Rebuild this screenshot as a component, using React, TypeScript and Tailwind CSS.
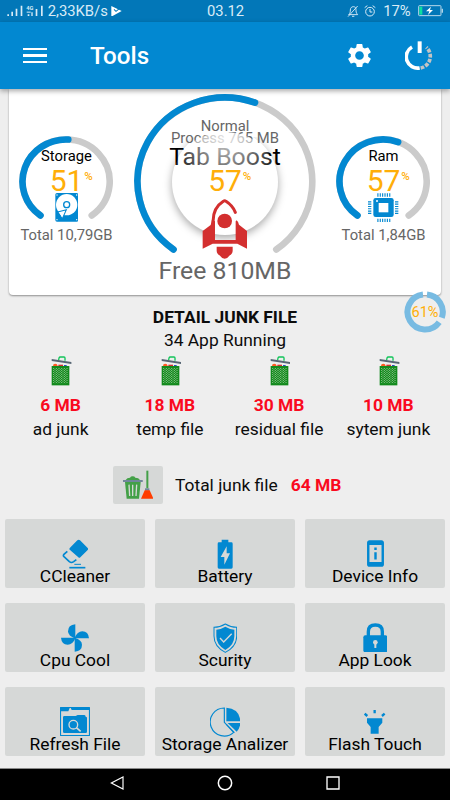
import type { ReactNode } from "react";
import { MdSettings, MdPermDeviceInformation } from "react-icons/md";

const BLUE = "#0288d1";

interface ArtProps {
  box: string;
  className: string;
  children: ReactNode;
}

function Art({ box, className, children }: ArtProps) {
  return (
    <svg viewBox={box} className={className} fill="none" preserveAspectRatio="none">
      {children}
    </svg>
  );
}

function StatusBar() {
  return (
    <div className="flex h-[22px] items-center bg-[#0277b8] pl-[7px] pr-[7px] text-[14.8px] leading-[22px] text-[#d9ebf6]">
      <div className="flex w-[200px] items-center">
        <Art box="21 12 110 40" className="h-[13.3px] w-[36.7px]">
          <g fill="#d9ebf6">
            <path d="M22 43h5v5h-5zM34 35h5v13h-5zM47 26h5v22h-5zM62 17h5v31h-5z" />
            <path d="M83 43h5v5h-5zM94 37h4v11h-4zM107 27h5v21h-5zM123 17h5v31h-5z" />
            <path d="M80 35h12v3H80z" />
            <text x="79" y="30" fontSize="17" fontWeight="700" fontFamily="Roboto">4G</text>
          </g>
        </Art>
        <span className="ml-[4px]">2,33KB/s</span>
        <Art box="334 17 33 32" className="ml-[3px] h-[10.7px] w-[11px]">
          <path d="M335 17l31 15-31 17z" fill="#fff" />
          <path d="M343 27l6 6 10-8" stroke="#0277b8" strokeWidth="3" />
        </Art>
      </div>
      <span className="flex-1">03.12</span>
      <Art box="371 14 36 37" className="h-[12.3px] w-[12px]">
        <path d="M376 43h27c-5-5-5-10-5-15 0-6-3-9-8-9s-9 4-9 10c0 5 0 9-5 14zM386 48h7M403 17l-29 32" stroke="#d9ebf6" strokeWidth="2.8" />
      </Art>
      <Art box="422 14 36 36" className="ml-[5px] h-[12px] w-[12px]">
        <circle cx="440" cy="34" r="13" stroke="#d9ebf6" strokeWidth="3" />
        <path d="M440 26v9h7M424 22l8-6M456 22l-8-6" stroke="#d9ebf6" strokeWidth="3" />
      </Art>
      <span className="ml-[7px]">17%</span>
      <Art box="579 15 76 34" className="ml-[7px] h-[11.3px] w-[25.3px]">
        <rect x="581" y="17" width="67" height="30" rx="2" stroke="#b8d8ea" strokeWidth="3" />
        <path d="M583 20h9v24h-9z" fill="#0be0a0" />
        <path d="M650 26h4v12h-4z" fill="#b8d8ea" />
        <path d="M618 20l-15 14h10l-4 11 15-15h-9z" fill="#fff" />
      </Art>
    </div>
  );
}

function AppBar() {
  return (
    <header className="relative z-30 flex h-[67px] items-center bg-[#0288d1] pl-[23px] pr-[15px] shadow-[0_2px_5px_rgba(0,0,0,0.35)]">
      <div className="flex w-6 flex-col gap-[4.5px]">
        <span className="h-[2.3px] bg-white" />
        <span className="h-[2.3px] bg-white" />
        <span className="h-[2.3px] bg-white" />
      </div>
      <h1 className="ml-[43px] flex-1 pt-px text-[24.2px] font-medium leading-7 text-white">Tools</h1>
      <MdSettings className="size-[29px] text-white" />
      <Art box="541 121 90 90" className="ml-[31px] size-[30px]">
        <path d="M562 139a34 34 0 0 0 23 63" stroke="#fff" strokeWidth="11" />
        <path d="M588 202a36 36 0 0 0 17-62" stroke="#c4c4c4" strokeWidth="11" strokeDasharray="11 4" />
        <path d="M585 122v35" stroke="#fff" strokeWidth="12" />
      </Art>
    </header>
  );
}

interface ArcProps {
  rx: number;
  ry: number;
  value: number;
  className: string;
}

// 288 degree arc that is open at the bottom
function Arc({ rx, ry, value, className }: ArcProps) {
  const cx = rx + 3.5;
  const cy = ry + 3.5;
  const at = (deg: number) => {
    const a = (deg * Math.PI) / 180;
    return `${cx + rx * Math.cos(a)} ${cy + ry * Math.sin(a)}`;
  };
  const sweep = (288 * value) / 100;
  const large = sweep > 180 ? 1 : 0;
  return (
    <svg width={cx * 2} height={cy * 2} className={className} fill="none" strokeWidth="6.6" strokeLinecap="round">
      <path d={`M${at(126)}A${rx} ${ry} 0 1 1 ${at(414)}`} stroke="#cbcbcb" />
      <path d={`M${at(126)}A${rx} ${ry} 0 ${large} 1 ${at(126 + sweep)}`} stroke={BLUE} />
    </svg>
  );
}

function Percent({ value }: { value: number }) {
  return (
    <div className="relative z-20 text-[30px] leading-[30px] text-[#ffae08]">
      {value}
      <span className="absolute left-full top-[4px] ml-[1px] text-[11.5px] font-medium leading-[12px]">%</span>
    </div>
  );
}

function DiskIcon() {
  return (
    <Art box="164 316 71 86" className="h-[28.7px] w-[23.7px]">
      <rect x="165" y="316" width="69" height="86" rx="5" fill={BLUE} />
      <circle cx="199" cy="351" r="32" fill="#fff" />
      <circle cx="199" cy="351" r="9" stroke={BLUE} strokeWidth="4" />
      <path d="M172 373l26-7-12 27z" fill="#fff" stroke={BLUE} strokeWidth="3" />
      <path d="M172 373l8 12" stroke={BLUE} strokeWidth="3" />
      <path d="M208 396l18-17v17z" fill={BLUE} />
      <g fill="#fff">
        <circle cx="170" cy="322" r="2" />
        <circle cx="229" cy="322" r="2" />
        <circle cx="170" cy="396" r="2" />
        <circle cx="229" cy="396" r="2" />
      </g>
    </Art>
  );
}

function ChipIcon() {
  return (
    <Art box="206 315 92 88" className="h-[29.3px] w-[30.7px]">
      <rect x="222" y="330" width="61" height="57" rx="7" fill={BLUE} />
      <path d="M238 345h29v28h-29z" fill="#fff" />
      <circle cx="233" cy="339" r="3" fill="#fff" />
      <path d="M234 321h39M234 397h39" stroke={BLUE} strokeWidth="10" strokeDasharray="3.4 3.7" />
      <path d="M211 340v38M292 340v38" stroke={BLUE} strokeWidth="10" strokeDasharray="3.4 3.5" />
    </Art>
  );
}

function RocketIcon() {
  return (
    <Art box="232 333 138 180" className="relative z-20 h-[60px] w-[46px]">
      <path d="M266 412c-4-36 8-58 30-72q4-3 8 0 20 13 28 33" stroke="#d32f2f" strokeWidth="9" strokeLinecap="round" />
      <circle cx="300" cy="399" r="22" fill="#d32f2f" />
      <path d="M262 395l9 5v56h62v-56l3-3q5 4 7 13l24 19v53l-29-15h-74l-30 15v-53l24-18z" fill="#d32f2f" />
      <path d="M276 476h48v12q0 9-10 15-6 9-14 9t-14-9q-10-6-10-15z" fill="#d32f2f" />
    </Art>
  );
}

function SmallGauge({ title, value, total, icon }: { title: string; value: number; total: string; icon: ReactNode }) {
  return (
    <div className="relative flex w-[115px] flex-col items-center pt-[58px]">
      <Arc rx={43.6} ry={42} value={value} className="absolute left-[10.4px] top-[46.8px]" />
      <p className="relative text-[14.8px] leading-[18px] text-black">{title}</p>
      <div className="mt-px">
        <Percent value={value} />
      </div>
      <div className="relative -mt-[3px] flex h-[29px] items-center">{icon}</div>
      <p className="mt-[4px] whitespace-nowrap text-[14.8px] leading-[18px] text-[#666]">{total}</p>
    </div>
  );
}

function BoostGauge() {
  return (
    <div className="relative flex w-[202px] flex-col items-center pt-[31px] text-[#666]">
      <Arc rx={87.4} ry={84} value={57} className="absolute left-[10.1px] top-[4.8px]" />
      <div className="absolute left-[48px] top-[40px] size-[106px] rounded-full bg-white shadow-[0_3px_8px_rgba(0,0,0,0.35)]" />
      {/* hides the upper edge of the disc's shadow */}
      <div className="absolute left-[61px] top-[26px] h-[22px] w-20 bg-white" />
      <p className="relative text-[14.8px] leading-[12px]">Normal</p>
      <p className="relative text-[14.8px] leading-[12px]">Process 765 MB</p>
      <p className="relative mt-px text-[24.8px] leading-[24px] text-black">Tab Boost</p>
      <div className="absolute left-[48px] top-[43px] z-10 h-[103px] w-[106px] rounded-full bg-[radial-gradient(circle_at_50%_4%,rgba(255,255,255,0.82)_0,rgba(255,255,255,0.5)_28px,rgba(255,255,255,0.1)_56px)]" />
      <div className="-mt-[3px]">
        <Percent value={57} />
      </div>
      <div className="mt-[3px] h-[60px]">
        <RocketIcon />
      </div>
      <p className="relative -mt-[2px] text-[24.8px] leading-[28px]">Free 810MB</p>
    </div>
  );
}

function FloatingBadge() {
  return (
    <div className="absolute left-[404px] top-[291px] z-30 flex size-[42px] items-center justify-center">
      <svg viewBox="0 0 42 42" className="absolute inset-0" fill="none" stroke="#78bbe2" strokeWidth="6">
        <path d="M23 3.6A17.5 17.5 0 0 1 37.8 26.8" />
        <path d="M35.2 31.2A17.5 17.5 0 1 1 19 3.6" />
      </svg>
      <span className="relative text-[14.6px] leading-4 text-[#ffae08]">61%</span>
    </div>
  );
}

function TrashIcon() {
  return (
    <Art box="153 168 62 89" className="ml-[2px] h-[29.7px] w-[20.7px]">
      <path d="M176 180l1-6q1-3 4-3h11q3 0 3 3v8" stroke="#12c45a" strokeWidth="4" />
      <path d="M155 177l59 9v6l-59-9z" fill="#566573" />
      <path d="M159 198q0-7 7-7 6 0 7 7z" fill="#ff5a1f" />
      <path d="M175 194h14v5h-14z" fill="#d32f2f" />
      <path d="M192 195h8v4h-8z" fill="#2b4fc0" />
      <path d="M155 198h53v58h-53z" fill="#128a1c" />
      <path d="M161 204v46M169 204v46M177 204v46M185 204v46M193 204v46M201 204v46" stroke="#8cc48d" strokeWidth="3" strokeDasharray="3 3" />
      <path d="M165 207v43M173 207v43M181 207v43M189 207v43M197 207v43" stroke="#6fb472" strokeWidth="3" strokeDasharray="3 3" />
    </Art>
  );
}

function BroomIcon() {
  return (
    <Art box="68 46 92 88" className="h-[29.3px] w-[30.7px]">
      <path d="M74 82h47l-5 50H79z" fill="#43a047" />
      <path d="M86 90l2 34M97 90v34M109 90l-2 34" stroke="#d6d8d7" strokeWidth="4" />
      <path d="M76 76q4-7 13-7 2-4 8-4t8 4q10 0 14 7z" fill="#43a047" />
      <path d="M69 79h56" stroke="#71869b" strokeWidth="6" strokeLinecap="round" />
      <path d="M141 48v53" stroke="#43a047" strokeWidth="6" />
      <path d="M134 101h13v7h-13z" fill="#71869b" />
      <path d="M133 107h15l11 25h-37z" fill="#ff3d00" />
    </Art>
  );
}

const junk = [
  { size: "6 MB", label: "ad junk" },
  { size: "18 MB", label: "temp file" },
  { size: "30 MB", label: "residual file" },
  { size: "10 MB", label: "sytem junk" },
];

const tools: { label: string; icon: ReactNode }[] = [
  {
    label: "CCleaner",
    icon: (
      <Art box="185 84 80 90" className="h-[30px] w-[26.7px]">
        <path d="M231 88q4-3 8 0l23 23q3 3 0 6l-22 22q-3 3-6 0l-25-22q-4-3 0-7z" fill={BLUE} />
        <path d="M201 121l-11 10q-2 3 1 6l16 15q6 5 13 0l8-6" stroke={BLUE} strokeWidth="5" />
        <path d="M222 160h20" stroke={BLUE} strokeWidth="3" />
        <path d="M207 170h48" stroke={BLUE} strokeWidth="5" />
      </Art>
    ),
  },
  {
    label: "Battery",
    icon: (
      <Art box="0 0 48 90" className="h-[30px] w-[16px]">
        <path d="M14 2h20v8h9q4 0 4 4v71q0 4-4 4H6q-4 0-4-4V14q0-4 4-4h8z" fill={BLUE} />
        <path d="M29 22L11 54h11v23l17-34H29z" fill="#d6d8d7" />
      </Art>
    ),
  },
  {
    label: "Device Info",
    icon: <MdPermDeviceInformation className="-mt-px h-[29px] w-[29px] text-[#0288d1]" />,
  },
  {
    label: "Cpu Cool",
    icon: (
      <Art box="183 341 84 84" className="size-[28px]">
        <g fill={BLUE}>
          <path d="M226 385V342q-22 2-22 21 0 14 22 22z" />
          <path d="M223 384h44q-2-21-20-21-15 0-24 21z" />
          <path d="M224 382v42q22-2 22-21 0-14-22-21z" />
          <path d="M227 382h-44q2 21 20 21 15 0 24-21z" />
        </g>
      </Art>
    ),
  },
  {
    label: "Scurity",
    icon: (
      <Art box="0 0 74 90" className="-mt-px h-[30px] w-[24.7px]">
        <path d="M37 3q16 10 34 10v26q0 32-34 49Q3 71 3 39V13q18 0 34-10z" stroke={BLUE} strokeWidth="3" />
        <path d="M37 11q13 8 27 9v20q0 26-27 41Q10 66 10 40V20q14-1 27-9z" fill={BLUE} />
        <path d="M21 45l11 12 24-25" stroke="#d6d8d7" strokeWidth="4" />
      </Art>
    ),
  },
  {
    label: "App Look",
    icon: (
      <Art box="413 338 74 88" className="-mt-px h-[29.3px] w-[24.7px]">
        <path d="M429 377v-13q0-20 21-20t21 20v13" stroke={BLUE} strokeWidth="10" />
        <rect x="414" y="375" width="72" height="51" rx="6" fill={BLUE} />
        <circle cx="450" cy="396" r="7" fill="#d6d8d7" />
        <path d="M447 398h6v15h-6z" fill="#d6d8d7" />
      </Art>
    ),
  },
  {
    label: "Refresh File",
    icon: (
      <Art box="180 96 90 87" className="-mt-[2px] h-[29px] w-[30px]">
        <rect x="181.500" y="97.500" width="87" height="84" rx="2" stroke={BLUE} strokeWidth="3.500" />
        <path d="M181 97h29l-5 12h-24zM211 97h57v8h-53z" fill={BLUE} />
        <path d="M189 127q0-4 4-4h34l6-3h20q4 0 4 5 4 0 4 4v41q0 4-4 4h-64q-4 0-4-4z" fill={BLUE} />
        <circle cx="220" cy="149" r="13" stroke="#d6d8d7" strokeWidth="4" />
        <path d="M229 158l13 11" stroke="#d6d8d7" strokeWidth="5" />
      </Art>
    ),
  },
  {
    label: "Storage Analizer",
    icon: (
      <Art box="0 0 92 90" className="-mt-px h-[30px] w-[30.7px]">
        <path d="M43 3A42 42 0 1 0 71 76L43 46z" stroke={BLUE} strokeWidth="3.500" />
        <path d="M49 2q40 3 42 41H49z" fill={BLUE} />
        <path d="M53 48h38q-1 15-11 26z" fill={BLUE} />
        <path d="M49 52l24 25" stroke={BLUE} strokeWidth="3" />
      </Art>
    ),
  },
  {
    label: "Flash Touch",
    icon: (
      <Art box="418 98 64 84" className="-mt-px h-[28px] w-[21.3px]">
        <path d="M427 129h46v13l-11 13v20h-24v-20l-11-13z" fill={BLUE} />
        <path d="M450 104v10M420 115l8 7M480 115l-8 7" stroke={BLUE} strokeWidth="7" />
      </Art>
    ),
  },
];

export default function App() {
  return (
    <div className="relative flex h-[800px] w-[450px] flex-col overflow-hidden bg-[#eeeeee] font-[Roboto,sans-serif] text-[17.4px] text-[#0c0c0c]">
      <StatusBar />
      <AppBar />

      <section className="mx-[9px] flex h-[206px] rounded-b-[4px] bg-white shadow-[0_1px_2px_rgba(0,0,0,0.4)]">
        <SmallGauge title="Storage" value={51} total="Total 10,79GB" icon={<DiskIcon />} />
        <BoostGauge />
        <SmallGauge title="Ram" value={57} total="Total 1,84GB" icon={<ChipIcon />} />
      </section>
      <FloatingBadge />

      <section className="pt-[11px] text-center leading-[23px]">
        <h2 className="font-bold">DETAIL JUNK FILE</h2>
        <p>34 App Running</p>
      </section>

      <section className="flex pl-[6px] pr-[7px] pt-[4px] leading-6">
        {junk.map((item) => (
          <div key={item.label} className="flex flex-1 flex-col items-center">
            <div className="h-[37px]">
              <TrashIcon />
            </div>
            <p className="font-bold text-[#fa0a1e]">{item.size}</p>
            <p className="whitespace-nowrap">{item.label}</p>
          </div>
        ))}
      </section>

      <section className="flex items-center pl-[113px] pt-[25px]">
        <button className="flex h-[38px] w-[50px] items-center justify-center rounded-[2px] bg-[#d6d8d7]">
          <BroomIcon />
        </button>
        <p className="ml-3">Total junk file</p>
        <p className="ml-[13px] font-bold text-[#fa0a1e]">64 MB</p>
      </section>

      <section className="grid grid-cols-3 gap-x-[10px] gap-y-[15px] px-[5px] pt-[15px]">
        {tools.map((tool) => (
          <button
            key={tool.label}
            className="flex h-[69px] flex-col items-center rounded-[2px] bg-[#d6d8d7] pt-[20px]"
          >
            <span className="flex h-[30px] items-center">{tool.icon}</span>
            <span className="-mt-[4px] whitespace-nowrap leading-[22px] text-black">{tool.label}</span>
          </button>
        ))}
      </section>

      <nav className="mt-auto flex h-[32px] items-center border-t border-[#8a8a8a] bg-black pb-[4px] pl-[110px]">
        <Art box="0 0 42 42" className="size-[14px]">
          <path d="M39 3v36L4 21z" stroke="#fff" strokeWidth="3.500" />
        </Art>
        <Art box="0 0 48 48" className="ml-[93px] size-[16px]">
          <circle cx="24" cy="24" r="20" stroke="#fff" strokeWidth="4.500" />
        </Art>
        <Art box="0 0 42 42" className="ml-[93px] size-[14px]">
          <path d="M3 3h36v36H3z" stroke="#fff" strokeWidth="4" />
        </Art>
      </nav>
    </div>
  );
}
